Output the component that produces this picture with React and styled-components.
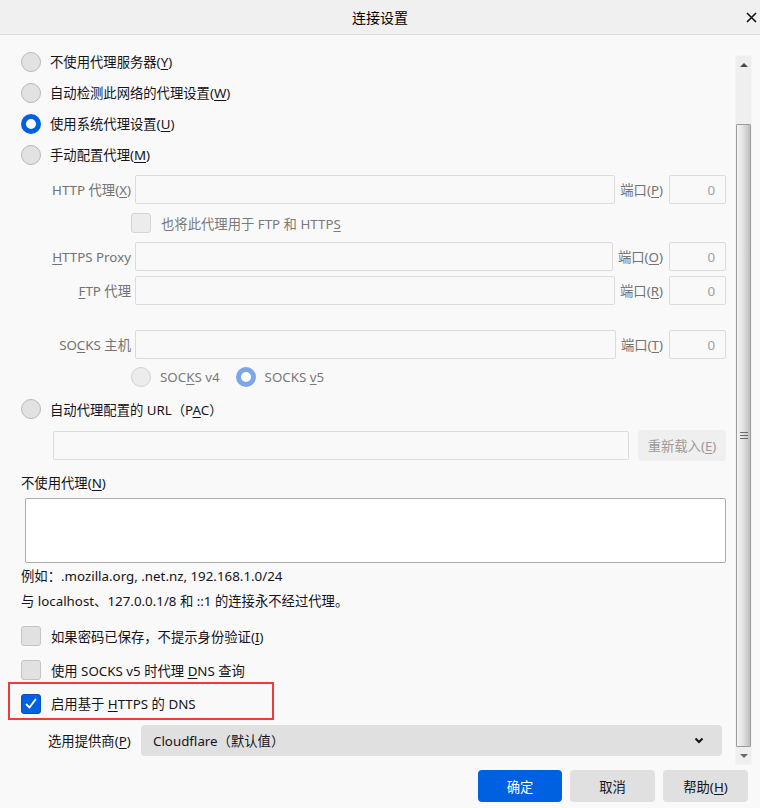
import styled, { createGlobalStyle } from 'styled-components';

const GlobalStyle = createGlobalStyle`
  html, body {
    margin: 0;
    padding: 0;
    background: #f9f9f9;
  }
  body {
    font-family: "Noto Sans", "Noto Sans CJK SC", sans-serif;
    font-size: 13.33px;
    color: #15141a;
  }
  * { box-sizing: border-box; }
`;

const Dialog = styled.div`
  width: 760px;
  height: 808px;
  display: flex;
  flex-direction: column;
  background: #f9f9f9;
  overflow: hidden;
`;

const TitleBar = styled.div`
  height: 35px;
  flex: none;
  display: grid;
  grid-template-columns: 1fr auto 1fr;
  align-items: center;
  background: #f0f0f0;
  border-bottom: 1px solid #dadada;
`;

const Title = styled.div`
  grid-column: 2;
  font-size: 14px;
  color: #000;
`;

const CloseButton = styled.div`
  justify-self: end;
  display: flex;
  align-items: center;
  padding-right: 3px;
`;

const Middle = styled.div`
  flex: 1;
  display: flex;
  min-height: 0;
`;

const Content = styled.div`
  flex: 1;
  padding: 11px 9px 0 21px;
  display: flex;
  flex-direction: column;
`;

/* classic scrollbar on the right */
const Scrollbar = styled.div`
  width: 17px;
  flex: none;
  margin: 20px 8px 0 0;
  display: flex;
  flex-direction: column;
  background: #efefef;
  border: 1px solid #f4f4f4;
`;

const ScrollArrow = styled.div`
  height: 17px;
  flex: none;
  display: flex;
  align-items: center;
  justify-content: center;

  &::after {
    content: '';
    width: 0;
    height: 0;
    border-left: 4px solid transparent;
    border-right: 4px solid transparent;
    ${(p) => (p.$down ? 'border-top: 4px solid #6a6a6a;' : 'border-bottom: 4px solid #4a4a4a;')}
  }
`;

const Track = styled.div`
  flex: 1;
  display: flex;
  flex-direction: column;
  padding-top: 51px;
`;

const Thumb = styled.div`
  flex: 1;
  border: 1px solid #9c9c9c;
  border-radius: 1px;
  background: linear-gradient(to right, #f4f4f4 0%, #e6e6e6 40%, #cfcfcf 75%, #bdbdbd 100%);
  display: flex;
  align-items: center;
  justify-content: center;
`;

const Grip = styled.div`
  width: 8px;
  height: 7px;
  background: repeating-linear-gradient(to bottom, #6a6a6a 0 1px, transparent 1px 3px);
`;

const RadioRow = styled.label`
  height: ${(p) => p.$h || 31}px;
  display: flex;
  align-items: center;
  gap: 9px;
  color: ${(p) => (p.$disabled ? '#7a7a7a' : '#15141a')};
`;

const Radio = styled.span`
  width: 20px;
  height: 20px;
  flex: none;
  border-radius: 50%;
  ${(p) =>
    p.$checked
      ? `border: 5px solid ${p.$disabled ? '#7ba7ea' : '#0061e0'}; background: #fff;`
      : `border: 1px solid ${p.$disabled ? '#d2d2d2' : '#b8b8b8'}; background: ${p.$disabled ? '#ececec' : '#e2e2e2'};`}
`;

const Box = styled.span`
  width: 20px;
  height: 20px;
  flex: none;
  border-radius: 3px;
  display: flex;
  align-items: center;
  justify-content: center;
  ${(p) =>
    p.$checked
      ? 'background: #0061e0; border: 1px solid #0053c2;'
      : `background: ${p.$disabled ? '#ececec' : '#e1e1e1'}; border: 1px solid ${p.$disabled ? '#d4d4d4' : '#c4c4c4'};`}
`;

const CheckRow = styled.label`
  height: ${(p) => p.$h || 34}px;
  display: flex;
  align-items: center;
  gap: 10px;
  margin-left: ${(p) => p.$indent || 0}px;
  margin-top: ${(p) => p.$mt || 0}px;
  color: ${(p) => (p.$disabled ? '#7a7a7a' : '#15141a')};
`;

const Text = styled.span`
  white-space: nowrap;
`;

const Key = styled.span`
  text-decoration: underline;
  text-underline-offset: 2px;
`;

const ProxyRow = styled.div`
  height: 29px;
  display: flex;
  align-items: center;
  margin-top: ${(p) => p.$mt || 0}px;
`;

const FieldLabel = styled.span`
  width: 110px;
  flex: none;
  text-align: right;
  margin-right: 4px;
  color: #737373;
  white-space: nowrap;
`;

const Field = styled.div`
  flex: 1;
  height: 29px;
  border: 1px solid #dcdcdc;
  border-radius: 2px;
  background: #f9f9f9;
`;

const PortLabel = styled.span`
  flex: none;
  margin: 0 6px 0 5px;
  color: #737373;
  white-space: nowrap;
`;

const PortField = styled.div`
  width: 57px;
  height: 29px;
  flex: none;
  border: 1px solid #dcdcdc;
  border-radius: 2px;
  display: flex;
  align-items: center;
  justify-content: flex-end;
  padding-right: 10px;
  color: #a0a0a0;
`;

const VersionRow = styled.div`
  height: 36px;
  display: flex;
  align-items: center;
  margin-left: 110px;
  gap: 16px;
`;

const PacRow = styled.div`
  display: flex;
  align-items: center;
  gap: 9px;
  margin: 7px 0 0 32px;
`;

const ReloadButton = styled.div`
  width: 88px;
  height: 31px;
  flex: none;
  border-radius: 4px;
  background: #efefef;
  color: #9a9a9a;
  display: flex;
  align-items: center;
  justify-content: center;
`;

const SectionLabel = styled.div`
  line-height: 20px;
  margin-top: 12px;
`;

const TextArea = styled.div`
  height: 65px;
  margin: 5px 0 0 4px;
  background: #fff;
  border: 1px solid #acacac;
  border-radius: 2px;
`;

const Hint = styled.div`
  line-height: 25px;
  margin-top: ${(p) => p.$mt || 0}px;
`;

const Highlight = styled.div`
  align-self: flex-start;
  width: 266px;
  margin: -5px 0 0 -13px;
  padding: 5px 0 0 11px;
  border: 2px solid #f03a3d;
`;

const ProviderRow = styled.div`
  height: 31px;
  display: flex;
  align-items: center;
  margin: 5px 4px 0 27px;
  gap: 9px;
`;

const ProviderLabel = styled.span`
  width: 84px;
  flex: none;
  white-space: nowrap;
`;

const Select = styled.div`
  flex: 1;
  height: 31px;
  border-radius: 4px;
  background: #e0e0e0;
  display: flex;
  align-items: center;
  justify-content: space-between;
  padding: 0 18px 0 12px;
`;

const Footer = styled.div`
  flex: none;
  display: flex;
  justify-content: flex-end;
  gap: 8px;
  padding: 5px 12px 6px 0;
`;

const Button = styled.div`
  width: ${(p) => p.$w || 85}px;
  height: 32px;
  border-radius: 4px;
  display: flex;
  align-items: center;
  justify-content: center;
  background: ${(p) => (p.$primary ? '#0061e0' : '#e0e0e0')};
  color: ${(p) => (p.$primary ? '#fff' : '#15141a')};
`;

const CheckMark = () => (
  <svg width="14" height="14" viewBox="0 0 14 14">
    <path d="M2.5 7.5 L5.5 10.5 L11.5 2.5" fill="none" stroke="#fff" strokeWidth="1.8" strokeLinecap="round" strokeLinejoin="round" />
  </svg>
);

const CloseIcon = () => (
  <svg width="11" height="11" viewBox="0 0 11 11">
    <path d="M1 1 L10 10 M10 1 L1 10" stroke="#111" strokeWidth="1.6" />
  </svg>
);

const Chevron = () => (
  <svg width="10" height="7" viewBox="0 0 10 7">
    <path d="M1.5 1.5 L5 5 L8.5 1.5" fill="none" stroke="#15141a" strokeWidth="2" />
  </svg>
);

const proxies = [
  { key: 'H', rest: 'TTPS Proxy', port: 'O', mt: 0 },
  { key: 'F', rest: 'TP 代理', port: 'R', mt: 5 },
];

export default function App() {
  return (
    <>
      <GlobalStyle />
      <Dialog>
        <TitleBar>
          <Title>连接设置</Title>
          <CloseButton>
            <CloseIcon />
          </CloseButton>
        </TitleBar>

        <Middle>
          <Content>
            <RadioRow><Radio /><Text>不使用代理服务器(<Key>Y</Key>)</Text></RadioRow>
            <RadioRow><Radio /><Text>自动检测此网络的代理设置(<Key>W</Key>)</Text></RadioRow>
            <RadioRow><Radio $checked /><Text>使用系统代理设置(<Key>U</Key>)</Text></RadioRow>
            <RadioRow><Radio /><Text>手动配置代理(<Key>M</Key>)</Text></RadioRow>

            <ProxyRow $mt={5}>
              <FieldLabel>HTTP 代理(<Key>X</Key>)</FieldLabel>
              <Field />
              <PortLabel>端口(<Key>P</Key>)</PortLabel>
              <PortField>0</PortField>
            </ProxyRow>
            <CheckRow $h={38} $indent={110} $disabled>
              <Box $disabled />
              <Text>也将此代理用于 FTP 和 HTTP<Key>S</Key></Text>
            </CheckRow>
            {proxies.map((p) => (
              <ProxyRow key={p.key} $mt={p.mt}>
                <FieldLabel><Key>{p.key}</Key>{p.rest}</FieldLabel>
                <Field />
                <PortLabel>端口(<Key>{p.port}</Key>)</PortLabel>
                <PortField>0</PortField>
              </ProxyRow>
            ))}
            <ProxyRow $mt={25}>
              <FieldLabel>SO<Key>C</Key>KS 主机</FieldLabel>
              <Field />
              <PortLabel>端口(<Key>T</Key>)</PortLabel>
              <PortField>0</PortField>
            </ProxyRow>
            <VersionRow>
              <RadioRow $disabled $h={36}><Radio $disabled /><Text>SOC<Key>K</Key>S v4</Text></RadioRow>
              <RadioRow $disabled $h={36}><Radio $disabled $checked /><Text>SOCKS <Key>v</Key>5</Text></RadioRow>
            </VersionRow>

            <RadioRow $h={28}><Radio /><Text>自动代理配置的 URL（P<Key>A</Key>C）</Text></RadioRow>
            <PacRow>
              <Field />
              <ReloadButton><Text>重新载入(<Key>E</Key>)</Text></ReloadButton>
            </PacRow>

            <SectionLabel>不使用代理(<Key>N</Key>)</SectionLabel>
            <TextArea />
            <Hint $mt={1}>例如：.mozilla.org, .net.nz, 192.168.1.0/24</Hint>
            <Hint>与 localhost、127.0.0.1/8 和 ::1 的连接永不经过代理。</Hint>

            <CheckRow $mt={5}>
              <Box />
              <Text>如果密码已保存，不提示身份验证(<Key>I</Key>)</Text>
            </CheckRow>
            <CheckRow>
              <Box />
              <Text>使用 SOCKS v5 时代理 <Key>D</Key>NS 查询</Text>
            </CheckRow>
            <Highlight>
              <CheckRow $h={29}>
                <Box $checked><CheckMark /></Box>
                <Text>启用基于 <Key>H</Key>TTPS 的 DNS</Text>
              </CheckRow>
            </Highlight>

            <ProviderRow>
              <ProviderLabel>选用提供商(<Key>P</Key>)</ProviderLabel>
              <Select>
                <Text>Cloudflare（默认值）</Text>
                <Chevron />
              </Select>
            </ProviderRow>
          </Content>

          <Scrollbar>
            <ScrollArrow />
            <Track>
              <Thumb>
                <Grip />
              </Thumb>
            </Track>
            <ScrollArrow $down />
          </Scrollbar>
        </Middle>

        <Footer>
          <Button $primary $w={84}>确定</Button>
          <Button>取消</Button>
          <Button><Text>帮助(<Key>H</Key>)</Text></Button>
        </Footer>
      </Dialog>
    </>
  );
}
